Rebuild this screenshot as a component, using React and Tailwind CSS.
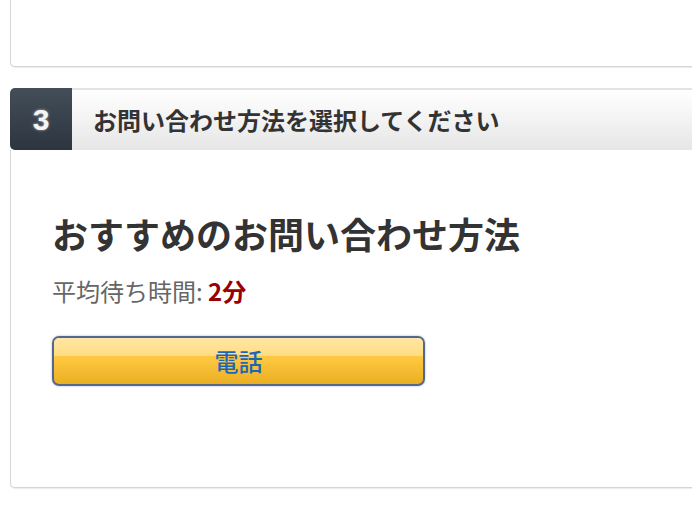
import React from 'react';

const font = { fontFamily: '"Noto Sans CJK JP", "Noto Sans", sans-serif' };

export default function App() {
  return (
    <div className="w-[692px] h-[518px] overflow-hidden bg-white" style={font}>
      {/* previous step card (bottom edge only) */}
      <div className="ml-[10px] -mr-4 -mt-4 h-[83px] rounded-b-[5px] border border-[#d5d5d5] bg-white shadow-[0_1px_1px_rgba(0,0,0,0.08)]" />

      {/* step 3 */}
      <div className="ml-[10px] -mr-4 mt-[21px]">
        <div className="flex h-[62px]">
          <div className="flex w-[62px] items-center justify-center rounded-l-[5px] bg-gradient-to-b from-[#444e59] to-[#2c3540]">
            <span className="text-[30px] font-bold text-[#f4f4f4] [text-shadow:0_0_3px_rgba(255,255,255,0.6)]" style={{ fontFamily: '"Liberation Sans", Arial, sans-serif' }}>3</span>
          </div>
          <div className="flex flex-1 items-center border-t-2 border-[#e3e3e3] bg-gradient-to-b from-[#ffffff] to-[#e6e6e6] pl-[21px]">
            <span className="text-[24px] font-bold text-[#333]">お問い合わせ方法を選択してください</span>
          </div>
        </div>
        <div className="h-[338px] rounded-b-[5px] border border-t-0 border-[#d5d5d5] bg-white pl-[41px] pt-[61px] shadow-[0_1px_1px_rgba(0,0,0,0.08)]">
          <h2 className="text-[36px] font-bold leading-[44px] text-[#333]">おすすめのお問い合わせ方法</h2>
          <p className="mt-[20px] text-[24px] leading-[32px] text-[#666]">
            平均待ち時間: <span className="font-bold text-[#990000]">2分</span>
          </p>
          <button className="relative mt-[29px] flex h-[50px] w-[373px] items-center justify-center overflow-hidden rounded-[7px] border-2 border-[#55678f] bg-gradient-to-b from-[#fdd25c] via-[#fcc53c] to-[#eaae22] shadow-[0_0_2px_rgba(60,80,130,0.5)]">
            <span className="absolute inset-x-0 top-0 h-[18px] bg-gradient-to-b from-[#ffe7a4] to-[#ffdc82]" />
            <span className="relative text-[24px] font-medium text-[#1a66b8]">電話</span>
          </button>
        </div>
      </div>
    </div>
  );
}
